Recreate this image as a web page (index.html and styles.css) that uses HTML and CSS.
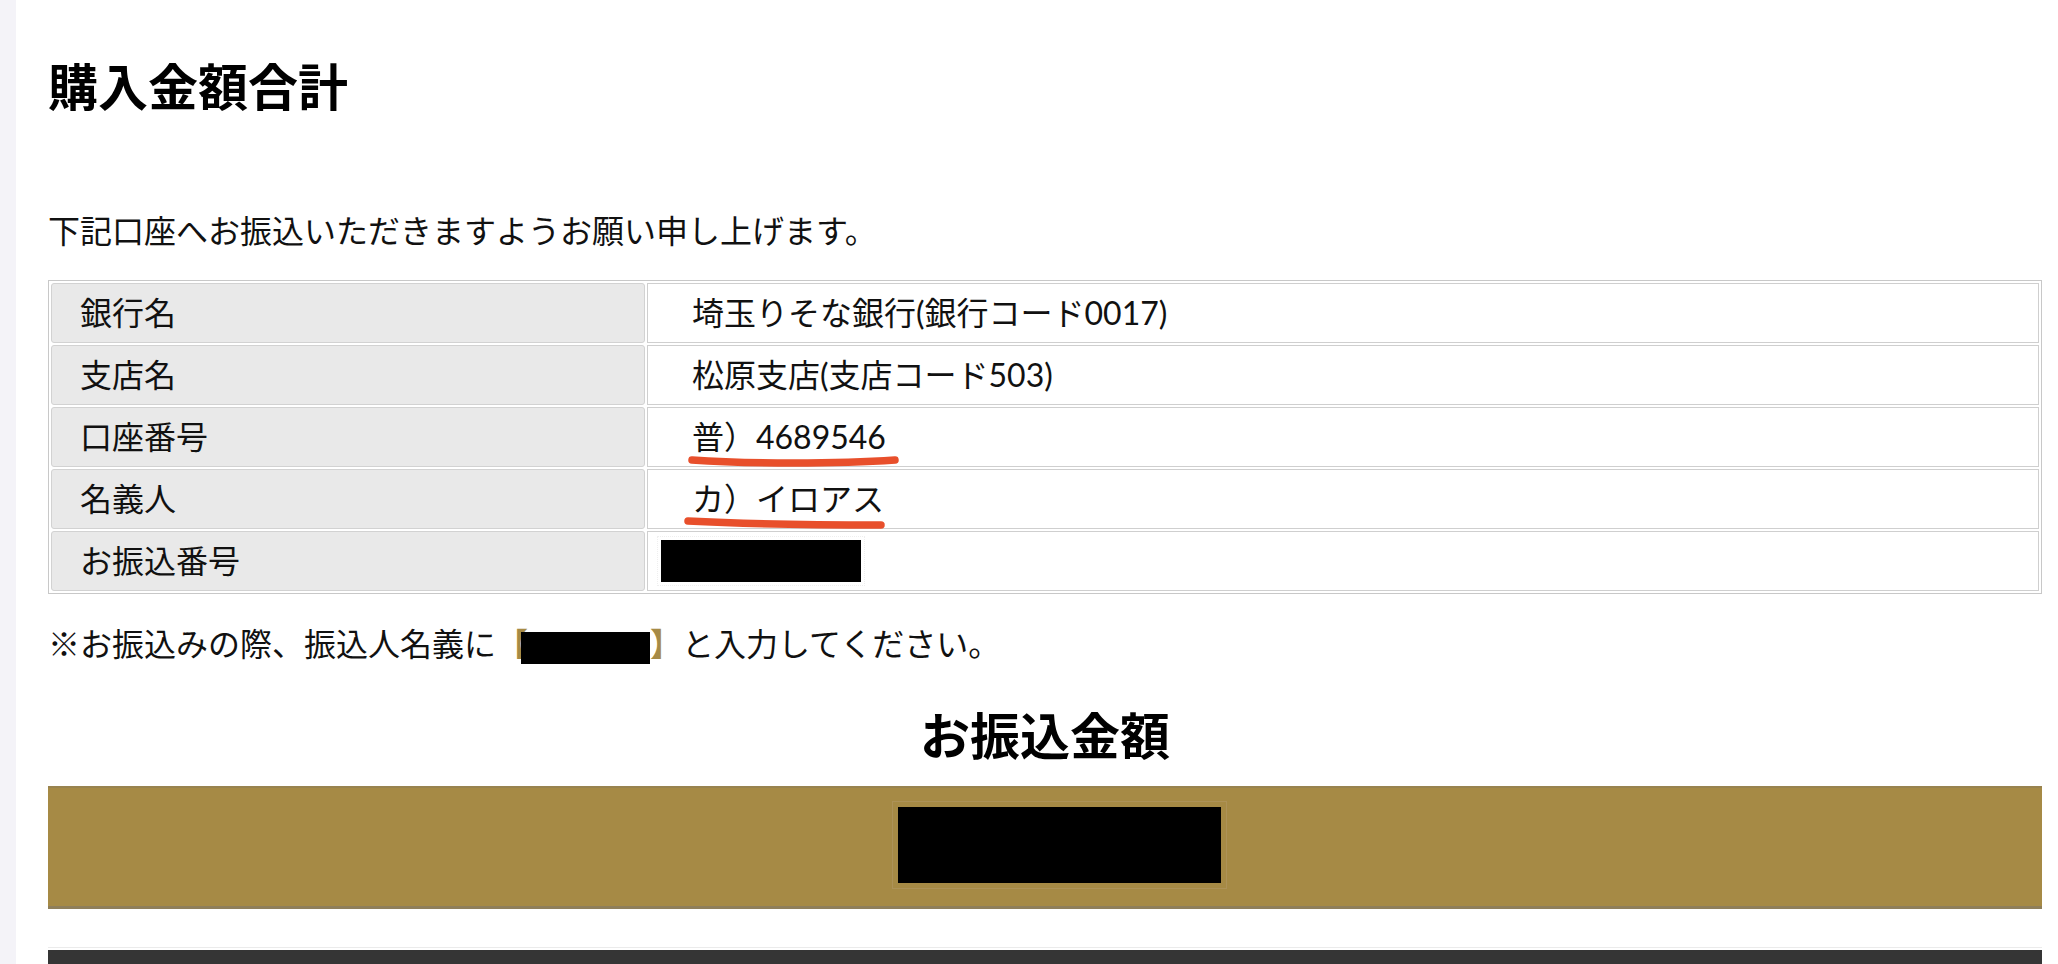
FILE: index.html
```html
<!DOCTYPE html>
<html lang="ja">
<head>
<meta charset="utf-8">
<title>購入金額合計</title>
<link rel="stylesheet" href="styles.css">
</head>
<body>
<div class="page">
  <div class="side"></div>
  <main class="content">
    <h1 class="title">購入金額合計</h1>
    <p class="lead">下記口座へお振込いただきますようお願い申し上げます。</p>
    <table class="bank">
      <tr>
        <th>銀行名</th>
        <td>埼玉りそな銀行(銀行コード0017)</td>
      </tr>
      <tr>
        <th>支店名</th>
        <td>松原支店(支店コード503)</td>
      </tr>
      <tr>
        <th>口座番号</th>
        <td><span class="mark">普）4689546<svg class="underline u1" width="220" height="14" viewBox="0 0 220 14"><path d="M4 6 C 60 10, 150 10, 207 6" /></svg></span></td>
      </tr>
      <tr>
        <th>名義人</th>
        <td><span class="mark">カ）イロアス<svg class="underline u2" width="210" height="14" viewBox="0 0 210 14"><path d="M4 5 C 60 8, 140 9, 197 9" /></svg></span></td>
      </tr>
      <tr>
        <th>お振込番号</th>
        <td><span class="redact code-redact"></span></td>
      </tr>
    </table>
    <p class="note">※お振込みの際、振込人名義に<span class="br">【</span><span class="redact name-redact"></span><span class="br">】</span>と入力してください。</p>
    <h2 class="amount-title">お振込金額</h2>
    <div class="amount-bar"><span class="redact amount-redact"></span></div>
    <div class="footer-bar"><div class="footer-dark"></div></div>
  </main>
</div>
</body>
</html>
```

FILE: styles.css
```css
html, body {
  margin: 0;
  padding: 0;
  background: #ffffff;
  overflow: hidden;
}

body {
  font-family: Lato, "Noto Sans CJK JP", sans-serif;
  color: #111111;
}

.page {
  display: flex;
  min-height: 100vh;
}

.side {
  width: 16px;
  flex: 0 0 16px;
  background: #f4f3f8;
}

.content {
  flex: 1;
  padding: 0 16px 0 32px;
}

.title {
  margin: 57px 0 0;
  font-size: 50px;
  line-height: 60px;
  font-weight: 700;
  color: #000;
}

.lead {
  margin: 94px 0 0;
  font-size: 32px;
  line-height: 40px;
}

.bank {
  width: 100%;
  margin-top: 29px;
  border-collapse: separate;
  border-spacing: 2px;
  border: 1px solid #c8c8c8;
  table-layout: fixed;
  font-size: 32px;
  background: #fff;
}

.bank th {
  width: 594px;
  box-sizing: border-box;
  background: #e9e9e9;
  border: 1px solid #d2d2d2;
  border-radius: 3px;
  text-align: left;
  font-weight: 400;
  padding: 0 0 0 28px;
  line-height: 58px;
  vertical-align: middle;
}

.bank td {
  border: 1px solid #cfcfcf;
  padding: 0 0 0 44px;
  line-height: 58px;
  vertical-align: middle;
}

.mark {
  position: relative;
  display: inline-block;
}

.underline {
  position: absolute;
  top: 46px;
  overflow: visible;
}

.u1 { left: -4px; }
.u2 { left: -8px; }

.underline path {
  fill: none;
  stroke: #e84f2b;
  stroke-width: 7.5;
  stroke-linecap: round;
}

.redact {
  background: #000;
}

.code-redact {
  display: block;
  width: 200px;
  height: 42px;
  margin-left: -31px;
  outline: 1px dotted #efefef;
  outline-offset: 3px;
}

.note {
  margin: 30px 0 0;
  font-size: 32px;
  line-height: 40px;
}

.br {
  color: #a68a45;
  font-weight: 700;
}

.name-redact {
  display: inline-block;
  width: 129px;
  height: 32px;
  margin-left: -7px;
  vertical-align: middle;
}

.amount-title {
  margin: 42px 0 0;
  font-size: 50px;
  line-height: 60px;
  font-weight: 700;
  text-align: center;
  color: #000;
}

.amount-bar {
  margin-top: 20px;
  display: flex;
  justify-content: center;
  background: #a68a45;
  border-top: 2px solid #98834f;
  border-bottom: 3px solid #8f7f5a;
  padding: 19px 0 23px 28px;
}

.amount-redact {
  display: block;
  width: 323px;
  height: 76px;
  outline: 1px solid #ad9258;
  outline-offset: 5px;
}

.footer-bar {
  margin-top: 38px;
  border-top: 1px solid #ebebeb;
  padding-top: 2px;
}

.footer-dark {
  height: 60px;
  background: #353535;
}
```
